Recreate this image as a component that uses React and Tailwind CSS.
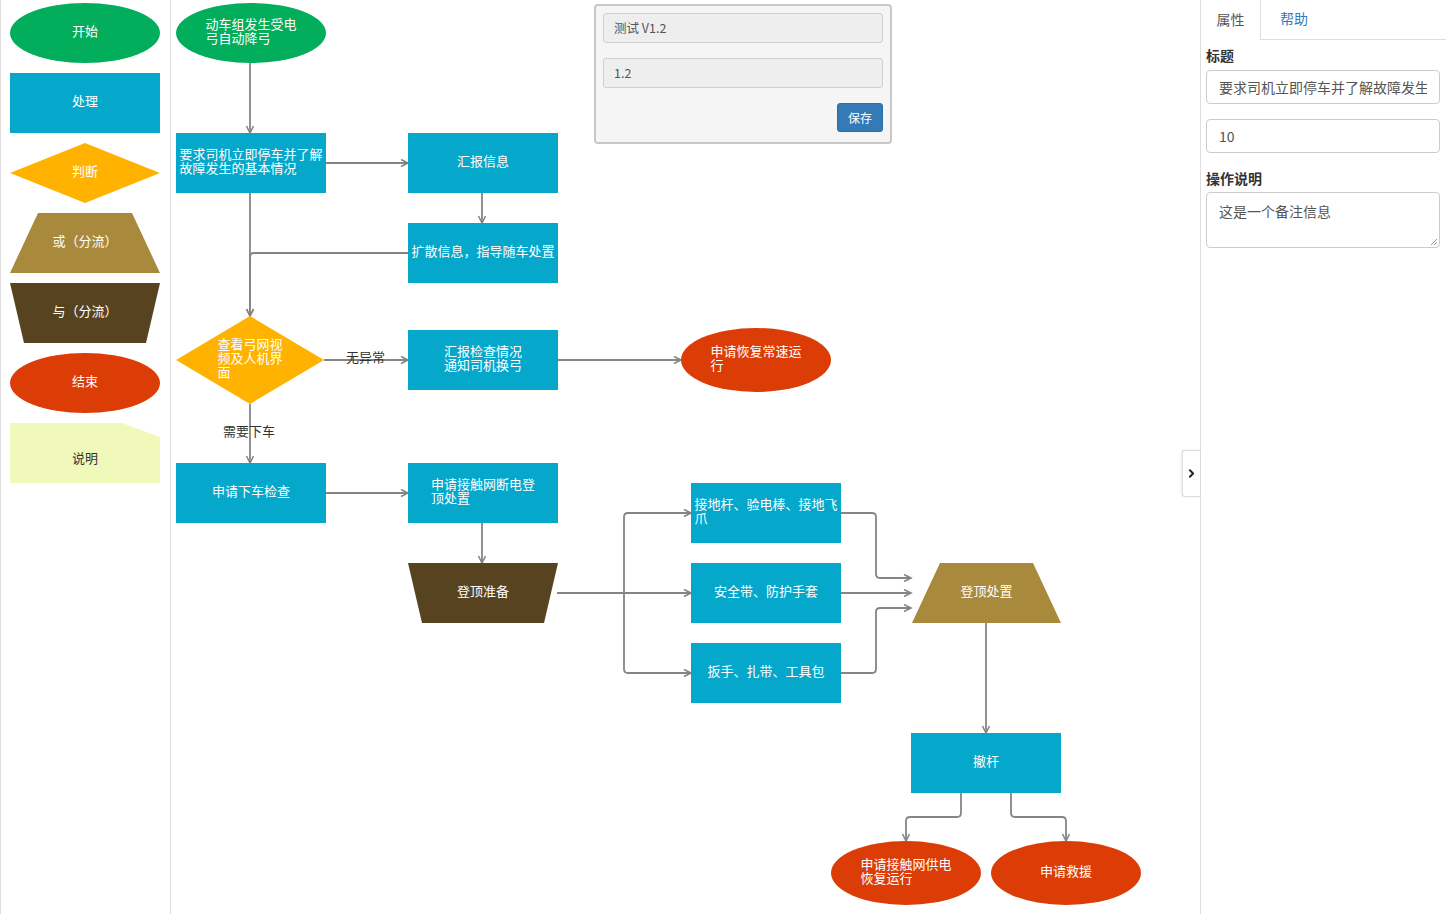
import React from 'react';
import { ChevronRight } from 'lucide-react';

const OX = 171; // canvas starts after the palette

const COLORS = {
  start: '#02ae5b',
  process: '#05a7cb',
  decide: '#ffb300',
  or: '#a9893b',
  and: '#57431f',
  end: '#dc3c06',
  note: '#f0f9ba',
};

function ShapeSvg({ type, w, h, fill }) {
  let shape;
  if (type === 'ellipse') shape = <ellipse cx={w / 2} cy={h / 2} rx={w / 2} ry={h / 2} fill={fill} />;
  else if (type === 'diamond') shape = <polygon points={`${w / 2},0 ${w},${h / 2} ${w / 2},${h} 0,${h / 2}`} fill={fill} />;
  else if (type === 'or') shape = <polygon points={`28,0 ${w - 28},0 ${w},${h} 0,${h}`} fill={fill} />;
  else if (type === 'and') shape = <polygon points={`0,0 ${w},0 ${w - 14},${h} 14,${h}`} fill={fill} />;
  else if (type === 'note') shape = <polygon points={`0,0 ${w - 38},0 ${w},14 ${w},${h} 0,${h}`} fill={fill} />;
  else shape = <rect x="0" y="0" width={w} height={h} fill={fill} />;
  return (
    <svg className="absolute inset-0" width={w} height={h}>
      {shape}
    </svg>
  );
}

function Node({ type, color, lines, w = 150, h = 60, dark = false, className = '', style }) {
  return (
    <div className={`relative shrink-0 ${className}`} style={{ width: w, height: h, ...style }}>
      <ShapeSvg type={type} w={w} h={h} fill={color} />
      <div className={`absolute inset-0 flex items-center justify-center ${type === 'note' ? 'pt-[14px]' : ''}`}>
        <div className={`-translate-y-[2px] text-left whitespace-nowrap text-[13px] leading-[14px] ${dark ? 'text-[#333]' : 'text-white'}`}>
          {lines.map((l, i) => (
            <div key={i}>{l}</div>
          ))}
        </div>
      </div>
    </div>
  );
}

const nodes = [
  { x: 176, y: 3, type: 'ellipse', color: COLORS.start, lines: ['动车组发生受电', '弓自动降弓'] },
  { x: 176, y: 133, type: 'rect', color: COLORS.process, lines: ['要求司机立即停车并了解', '故障发生的基本情况'] },
  { x: 408, y: 133, type: 'rect', color: COLORS.process, lines: ['汇报信息'] },
  { x: 408, y: 223, type: 'rect', color: COLORS.process, lines: ['扩散信息，指导随车处置'] },
  { x: 176, y: 316, h: 88, w: 148, type: 'diamond', color: COLORS.decide, lines: ['查看弓网视', '频及人机界', '面'] },
  { x: 408, y: 330, type: 'rect', color: COLORS.process, lines: ['汇报检查情况', '通知司机换弓'] },
  { x: 681, y: 328, h: 64, type: 'ellipse', color: COLORS.end, lines: ['申请恢复常速运', '行'] },
  { x: 176, y: 463, type: 'rect', color: COLORS.process, lines: ['申请下车检查'] },
  { x: 408, y: 463, type: 'rect', color: COLORS.process, lines: ['申请接触网断电登', '顶处置'] },
  { x: 408, y: 563, type: 'and', color: COLORS.and, lines: ['登顶准备'] },
  { x: 691, y: 483, type: 'rect', color: COLORS.process, lines: ['接地杆、验电棒、接地飞', '爪'] },
  { x: 691, y: 563, type: 'rect', color: COLORS.process, lines: ['安全带、防护手套'] },
  { x: 691, y: 643, type: 'rect', color: COLORS.process, lines: ['扳手、扎带、工具包'] },
  { x: 912, y: 563, w: 149, type: 'or', color: COLORS.or, lines: ['登顶处置'] },
  { x: 911, y: 733, type: 'rect', color: COLORS.process, lines: ['撤杆'] },
  { x: 831, y: 841, h: 64, type: 'ellipse', color: COLORS.end, lines: ['申请接触网供电', '恢复运行'] },
  { x: 991, y: 841, h: 64, type: 'ellipse', color: COLORS.end, lines: ['申请救援'] },
];

const edges = [
  'M250,63 V133',
  'M325,163 H408',
  'M482,193 V223',
  'M250,193 V316',
  'M408,253 H254 Q250,253 250,257 V316',
  'M324,360 H408',
  'M250,404 V463',
  'M557,360 H681',
  'M325,493 H408',
  'M482,523 V563',
  'M557,593 H691',
  'M624,593 V517 Q624,513 628,513 H691',
  'M624,593 V669 Q624,673 628,673 H691',
  'M840,513 H872 Q876,513 876,517 V574 Q876,578 880,578 H911',
  'M840,593 H911',
  'M840,673 H872 Q876,673 876,669 V612 Q876,608 880,608 H911',
  'M986,622 V733',
  'M961,792 V813 Q961,817 957,817 H910 Q906,817 906,821 V841',
  'M1011,792 V813 Q1011,817 1015,817 H1062 Q1066,817 1066,821 V841',
];

const palette = [
  { type: 'ellipse', color: COLORS.start, lines: ['开始'] },
  { type: 'rect', color: COLORS.process, lines: ['处理'] },
  { type: 'diamond', color: COLORS.decide, lines: ['判断'] },
  { type: 'or', color: COLORS.or, lines: ['或（分流）'] },
  { type: 'and', color: COLORS.and, lines: ['与（分流）'] },
  { type: 'ellipse', color: COLORS.end, lines: ['结束'] },
  { type: 'note', color: COLORS.note, lines: ['说明'], dark: true },
];

export default function App() {
  return (
    <div
      className="flex h-screen w-full overflow-hidden bg-white"
      style={{ fontFamily: '"Noto Sans CJK SC", "Liberation Sans", sans-serif' }}
    >
      {/* Palette */}
      <div className="w-[171px] shrink-0 border-l border-r border-[#ddd] flex flex-col gap-[10px] pt-[3px] pl-[9px]">
        {palette.map((p, i) => (
          <Node key={i} {...p} />
        ))}
      </div>

      {/* Canvas */}
      <div className="relative flex-1">
        <svg className="absolute inset-0 w-full h-full">
          <defs>
            <marker id="arr" markerWidth="10" markerHeight="10" refX="8" refY="4" orient="auto" markerUnits="userSpaceOnUse">
              <path d="M1,0.5 L8,4 L1,7.5" fill="none" stroke="#858585" strokeWidth="1.6" />
            </marker>
          </defs>
          <g transform={`translate(${-OX},0)`}>
            {edges.map((d, i) => (
              <path key={i} d={d} fill="none" stroke="#858585" strokeWidth="1.8" markerEnd="url(#arr)" />
            ))}
          </g>
        </svg>

        {nodes.map((n, i) => (
          <Node key={i} {...n} className="!absolute" style={{ left: n.x - OX, top: n.y }} />
        ))}

        <div className="absolute left-[175px] top-[348px] text-[13px] leading-[18px] text-[#333]">无异常</div>
        <div className="absolute left-[52px] top-[422px] text-[13px] leading-[18px] text-[#333]">需要下车</div>

        {/* Version dialog */}
        <div className="absolute left-[423px] top-[4px] w-[298px] h-[140px] rounded-[4px] border-2 border-[#c8c8c8] bg-[#f5f5f5] px-[7px] pt-[7px]">
          <div className="h-[30px] rounded-[3px] border border-[#d0d0d0] bg-[#eee] px-[10px] flex items-center text-[12.5px] text-[#555]">
            测试 V1.2
          </div>
          <div className="mt-[15px] h-[30px] rounded-[3px] border border-[#d0d0d0] bg-[#eee] px-[10px] flex items-center text-[12.5px] text-[#555]">
            1.2
          </div>
          <div className="mt-[15px] flex justify-end">
            <button className="h-[29px] w-[46px] rounded-[3px] border border-[#2e6da4] bg-[#337ab7] text-[12px] text-white">
              保存
            </button>
          </div>
        </div>

        {/* Collapse toggle */}
        <div className="absolute right-0 top-[450px] w-[18px] h-[47px] bg-white border border-r-0 border-[#ddd] rounded-l-[3px] shadow-[-1px_0_3px_rgba(0,0,0,0.08)] flex items-center justify-center">
          <ChevronRight size={13} strokeWidth={3.5} className="text-[#222]" />
        </div>
      </div>

      {/* Properties panel */}
      <div className="w-[246px] shrink-0 border-l border-[#ddd] flex flex-col">
        <div className="flex h-[40px]">
          <div className="w-[60px] border-r border-[#ddd] flex items-center justify-center pb-[2px] text-[14px] text-[#555]">属性</div>
          <div className="flex-1 border-b border-[#ddd] flex items-center pl-[19px] pb-[2px] text-[14px] text-[#337ab7]">帮助</div>
        </div>
        <div className="px-[5px] pr-[6px]">
          <div className="mt-[5px] text-[14px] font-bold text-[#333] leading-[20px]">标题</div>
          <div className="mt-[5px] h-[34px] rounded-[4px] border border-[#ccc] flex items-center px-[12px] text-[14px] text-[#555]">
            <div className="overflow-hidden whitespace-nowrap">要求司机立即停车并了解故障发生的基本情况</div>
          </div>
          <div className="mt-[15px] h-[34px] rounded-[4px] border border-[#ccc] flex items-center px-[12px] text-[14px] text-[#555]">
            10
          </div>
          <div className="mt-[15px] text-[14px] font-bold text-[#333] leading-[20px]">操作说明</div>
          <div className="relative mt-[4px] h-[56px] rounded-[4px] border border-[#ccc] px-[12px] pt-[8px] text-[14px] text-[#555] leading-[20px]">
            这是一个备注信息
            <svg className="absolute right-[1px] bottom-[1px]" width="9" height="9">
              <path d="M8,2 L2,8 M8,5 L5,8" stroke="#999" strokeWidth="1" />
            </svg>
          </div>
        </div>
      </div>
    </div>
  );
}
